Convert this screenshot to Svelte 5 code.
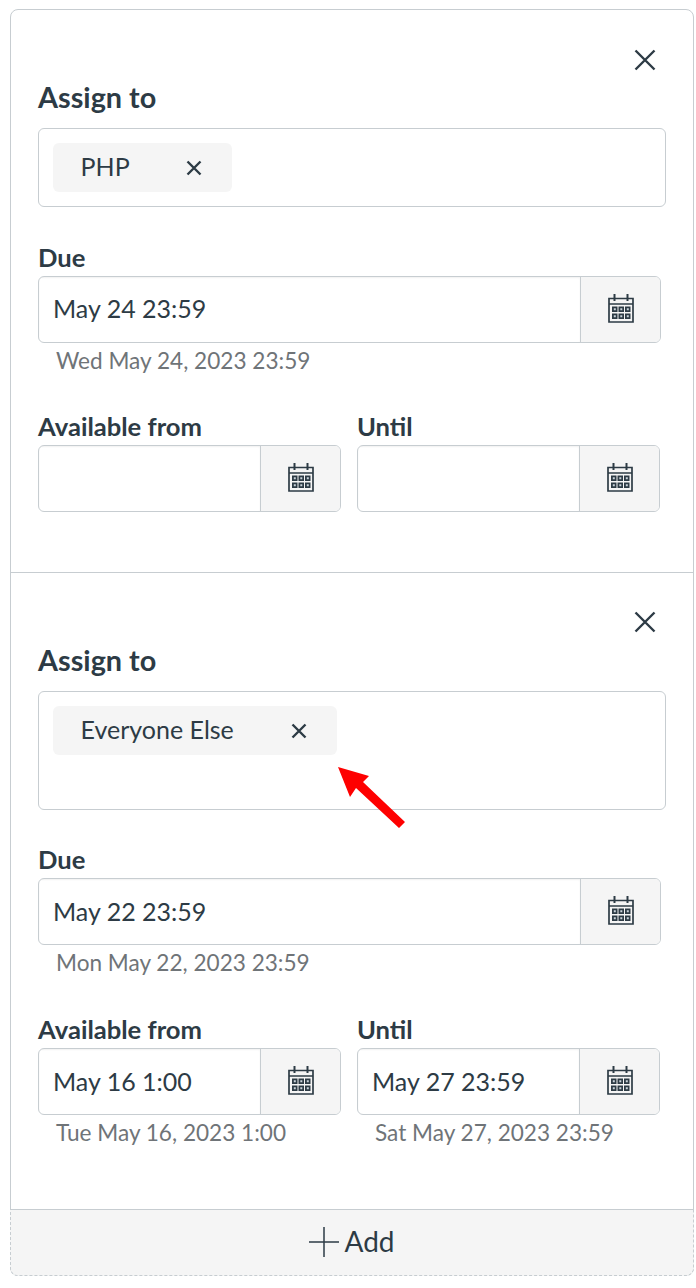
<script>
  const sections = [
    {
      tag: "PHP",
      chipWidth: 179,
      boxHeight: 79,
      due: "May 24 23:59",
      dueHint: "Wed May 24, 2023 23:59",
      from: "",
      fromHint: "",
      until: "",
      untilHint: "",
    },
    {
      tag: "Everyone Else",
      chipWidth: 284,
      boxHeight: 119,
      due: "May 22 23:59",
      dueHint: "Mon May 22, 2023 23:59",
      from: "May 16 1:00",
      fromHint: "Tue May 16, 2023 1:00",
      until: "May 27 23:59",
      untilHint: "Sat May 27, 2023 23:59",
    },
  ];
</script>

{#snippet calendar()}
  <svg class="cal" viewBox="0 0 26 29" width="26" height="29" aria-hidden="true">
    <path d="M1 4.500h24v23.500H1z" fill="none" stroke="#2d3b45" stroke-width="1.700" />
    <path d="M1 10h24" stroke="#2d3b45" stroke-width="1.700" />
    <path d="M6.500 0v7M19.500 0v7" stroke="#2d3b45" stroke-width="2" />
    <path
      d="M4 12.500h5.500v5.500H4zM10.500 12.500h5.500v5.500h-5.500zM17 12.500h5.500v5.500H17zM4 19.500h5.500V25H4zM10.500 19.500h5.500V25h-5.500zM17 19.500h5.500V25H17z"
      fill="#2d3b45"
    />
    <path
      d="M5.800 14.300h2v2h-2zM12.300 14.300h2v2h-2zM18.800 14.300h2v2h-2zM5.800 21.300h2v2h-2zM12.300 21.300h2v2h-2zM18.800 21.300h2v2h-2z"
      fill="#c9d3da"
    />
  </svg>
{/snippet}

{#snippet dateField(label, value, hint)}
  <div class="field">
    <div class="label">{label}</div>
    <div class="date-input">
      <div class="value">{value}</div>
      <button class="cal-btn" aria-label="Calendar">{@render calendar()}</button>
    </div>
    {#if hint}
      <div class="hint">{hint}</div>
    {/if}
  </div>
{/snippet}

<div class="card">
  {#each sections as s}
    <section class="override" class:last={s.from}>
      <div class="close-row">
        <svg viewBox="0 0 22 22" width="22" height="22" aria-hidden="true">
          <path d="M1.500 1.500l19 19M20.500 1.500l-19 19" stroke="#2d3b45" stroke-width="2.400" fill="none" />
        </svg>
      </div>
      <div class="label assign">Assign to</div>
      <div class="assign-box" style="height: {s.boxHeight}px">
        <div class="chip" style="width: {s.chipWidth}px">
          <span>{s.tag}</span>
          <svg viewBox="0 0 16 16" width="16" height="16" aria-hidden="true">
            <path d="M1.500 1.500l13 13M14.500 1.500l-13 13" stroke="#2d3b45" stroke-width="2.400" fill="none" />
          </svg>
        </div>
      </div>
      <div class="due">
        {@render dateField("Due", s.due, s.dueHint)}
      </div>
      <div class="range">
        {@render dateField("Available from", s.from, s.fromHint)}
        {@render dateField("Until", s.until, s.untilHint)}
      </div>
    </section>
  {/each}
  <button class="add">
    <svg viewBox="0 0 30 30" width="30" height="30" aria-hidden="true">
      <path d="M15 0v30M0 15h30" stroke="#2d3b45" stroke-width="1.500" fill="none" />
    </svg>
    <span>Add</span>
  </button>

  <svg class="arrow" viewBox="0 0 72 66" width="72" height="66" aria-hidden="true">
    <path d="M2 2L33 11L27 17L69 57L63 63L20 23L14 32Z" fill="#fe0000" />
  </svg>
</div>

<style>
  :global(body) {
    margin: 0;
    background: #fff;
  }

  .card {
    position: relative;
    box-sizing: border-box;
    width: 684px;
    height: 1267px;
    margin: 9px 0 0 10px;
    border: 1px solid #c7cdd1;
    border-radius: 8px;
    font-family: Lato, sans-serif;
    color: #2d3b45;
    display: flex;
    flex-direction: column;
  }

  .override {
    padding: 0 27px;
    height: 563px;
    border-bottom: 1px solid #c7cdd1;
    box-sizing: border-box;
  }

  .override.last {
    flex: 1;
    border-bottom: none;
    height: auto;
  }

  .close-row {
    height: 60px;
    padding: 39px 10px 0 0;
    box-sizing: border-box;
    display: flex;
    justify-content: flex-end;
    align-items: flex-start;
  }

  .last .close-row {
    height: 59px;
    padding-top: 38px;
  }

  .label {
    font-size: 25.600px;
    font-weight: 700;
    line-height: 34px;
  }

  .label.assign {
    font-size: 28.800px;
    line-height: 36px;
    margin-top: 9px;
    height: 49px;
  }

  .last .label.assign {
    margin-top: 10px;
  }

  .assign-box {
    box-sizing: border-box;
    border: 1px solid #c7cdd1;
    border-radius: 6px;
    padding: 14px;
  }

  .chip {
    box-sizing: border-box;
    height: 49px;
    border-radius: 6px;
    background: #f5f5f5;
    padding: 0 30px 0 27.600px;
    display: flex;
    align-items: center;
    justify-content: space-between;
    font-size: 25px;
  }

  .chip span {
    padding-bottom: 3px;
  }

  .due {
    margin-top: 33px;
    margin-right: 5px;
  }

  .last .due {
    margin-top: 32px;
  }

  .range {
    display: grid;
    grid-template-columns: 303px 303px;
    column-gap: 16px;
    margin-top: 30px;
  }

  .last .range {
    margin-top: 31px;
  }

  .field .label {
    height: 36px;
  }

  .date-input {
    box-sizing: border-box;
    height: 67px;
    border: 1px solid #c7cdd1;
    border-radius: 6px;
    display: flex;
    overflow: hidden;
  }

  .value {
    flex: 1;
    padding-left: 14px;
    font-size: 25px;
    line-height: 63px;
    box-shadow: inset 0 1px 2px rgba(0, 0, 0, 0.06);
  }

  .last .value {
    line-height: 65px;
  }

  .cal-btn {
    width: 80px;
    padding: 0 0 2px;
    border: none;
    border-left: 1px solid #c7cdd1;
    background: #f5f5f5;
    display: flex;
    align-items: center;
    justify-content: center;
  }

  .hint {
    padding-left: 18px;
    height: 36px;
    font-size: 22.600px;
    line-height: 36px;
    color: #6f7478;
  }

  .add {
    box-sizing: border-box;
    height: 67px;
    margin: 0 -1px -1px;
    padding: 0 0 4px;
    border: 1px dashed #c7cdd1;
    border-top: 1px solid #c7cdd1;
    border-radius: 0 0 8px 8px;
    background: #f5f5f5;
    color: #2d3b45;
    font-family: inherit;
    font-size: 28px;
    display: flex;
    align-items: center;
    justify-content: center;
    gap: 5px;
  }

  .add svg {
    margin-top: 2px;
  }

  .arrow {
    position: absolute;
    left: 325px;
    top: 755px;
  }
</style>
